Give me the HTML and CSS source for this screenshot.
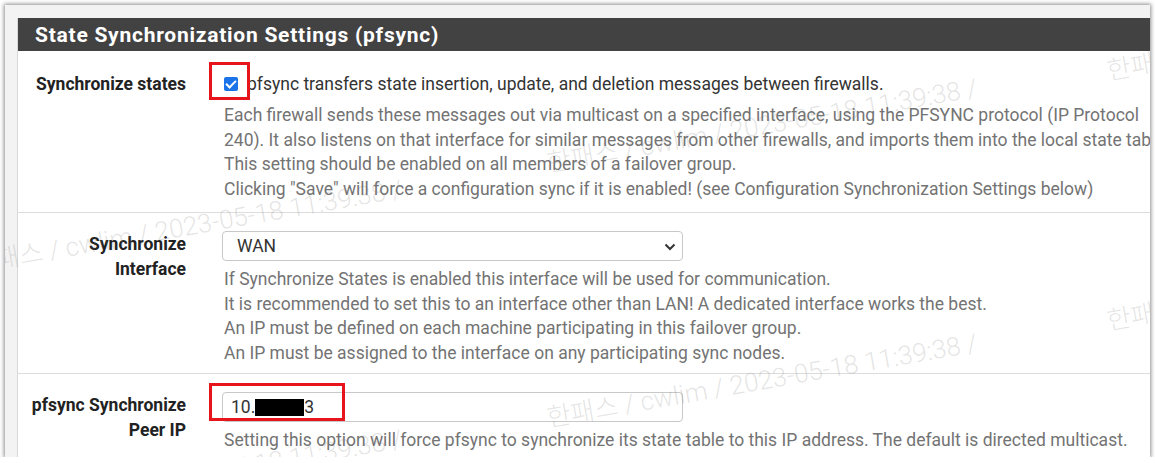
FILE: index.html
```html
<!DOCTYPE html>
<html>
<head>
<meta charset="utf-8">
<link rel="stylesheet" href="styles.css">
</head>
<body>
<div class="frame">
  <div class="panel">
    <div class="panel-heading">State Synchronization Settings (pfsync)</div>
    <div class="row row1">
      <div class="label">Synchronize states</div>
      <div class="field">
        <label class="check"><span class="cbox"><span class="mark"></span></span>pfsync transfers state insertion, update, and deletion messages between firewalls.</label>
        <div class="help">Each firewall sends these messages out via multicast on a specified interface, using the PFSYNC protocol (IP Protocol 240). It also listens on that interface for similar messages from other firewalls, and imports them into the local state table.<br>This setting should be enabled on all members of a failover group.<br>Clicking "Save" will force a configuration sync if it is enabled! (see Configuration Synchronization Settings below)</div>
      </div>
    </div>
    <div class="row row2">
      <div class="label">Synchronize<br>Interface</div>
      <div class="field">
        <div class="select">WAN<svg class="chev" width="12" height="8" viewBox="0 0 12 8"><path d="M1.5 1.5 L6 6 L10.5 1.5" fill="none" stroke="#333" stroke-width="2"/></svg></div>
        <div class="help">If Synchronize States is enabled this interface will be used for communication.<br>It is recommended to set this to an interface other than LAN! A dedicated interface works the best.<br>An IP must be defined on each machine participating in this failover group.<br>An IP must be assigned to the interface on any participating sync nodes.</div>
      </div>
    </div>
    <div class="row row3">
      <div class="label">pfsync Synchronize<br>Peer IP</div>
      <div class="field">
        <div class="input">10.<span class="redact"></span>3</div>
        <div class="help">Setting this option will force pfsync to synchronize its state table to this IP address. The default is directed multicast.</div>
      </div>
    </div>
  </div>
  <div class="hl hl1"></div>
  <div class="hl hl2"></div>
  <div class="wm wm1">한패스 / cwlim / 2023-05-18 11:39:38 /</div>
  <div class="wm wm2">한패스 / cwlim / 2023-05-18 11:39:38 /</div>
  <div class="wm wm3">한패스 / cwlim / 2023-05-18 11:39:38 /</div>
  <div class="wm wm4">한패</div>
  <div class="wm wm5">한패</div>
  <div class="wm wm6">한패스 / cwlim / 2023-05-18 11:39:38 /</div>
</div>
</body>
</html>
```
FILE: styles.css
```css
html, body { margin: 0; padding: 0; background: #fff; }
body { font-family: Roboto, "Noto Sans CJK KR", sans-serif; }
.frame {
  position: relative;
  margin: 5px 0 0 5px;
  width: 1145px;
  height: 452px;
  background: #f3f3f3;
  box-shadow: 0 0 4px 1px rgba(0,0,0,0.45);
  overflow: hidden;
  padding: 13px 0 0 12px;
  box-sizing: border-box;
}
.panel {
  background: #fff;
  border-left: 1px solid #d8d8d8;
  height: 100%;
  width: 1140px;
}
.panel-heading {
  background: #424242;
  color: #fff;
  font-weight: 700;
  font-size: 21px;
  letter-spacing: 0.75px;
  height: 33px;
  line-height: 34px;
  padding-left: 17px;
  white-space: nowrap;
}
.row {
  display: flex;
  border-bottom: 1px solid #ddd;
  height: 162px;
  box-sizing: border-box;
}
.row2 { height: 161px; }
.row3 { border-bottom: none; height: auto; }
.label {
  width: 168px;
  flex: none;
  text-align: right;
  font-weight: 700;
  font-size: 17.5px;
  color: #222;
  line-height: 25px;
  padding-top: 21px;
}
.row2 .label { padding-top: 18.5px; }
.row3 .label { padding-top: 18.5px; }
.field {
  padding-left: 38px;
  font-size: 17.5px;
  color: #333;
  flex: 1;
  min-width: 0;
}
.check {
  display: flex;
  align-items: center;
  height: 24px;
  margin-top: 21px;
  white-space: nowrap;
}
.cbox {
  width: 14px; height: 14px;
  background: #1a73e8;
  border-radius: 2px;
  margin-right: 9px;
  position: relative;
  flex: none;
}
.mark {
  position: absolute;
  left: 4px; top: 1px;
  width: 4px; height: 8px;
  border: solid #fff;
  border-width: 0 2px 2px 0;
  transform: rotate(45deg);
}
.help {
  color: #737373;
  line-height: 24.5px;
  margin-top: 7px;
  width: 950px;
}
.row2 .help { margin-top: 6px; }
.row3 .help { margin-top: 6px; white-space: nowrap; }
.select, .input {
  margin-left: -2px;
  margin-top: 18px;
  width: 461px;
  height: 30px;
  box-sizing: border-box;
  border: 1px solid #c8c8c8;
  border-radius: 4px;
  line-height: 28px;
  padding-left: 14px;
  color: #333;
  position: relative;
}
.chev { position: absolute; right: 6px; top: 11px; }
.input { padding-left: 8px; margin-top: 18px; }
.redact {
  display: inline-block;
  width: 49px;
  height: 17px;
  background: #000;
  vertical-align: -3px;
}
.hl {
  position: absolute;
  border: 3px solid #e8141c;
  box-sizing: border-box;
}
.hl1 { left: 204px; top: 57px; width: 41px; height: 38px; }
.hl2 { left: 204px; top: 378px; width: 136px; height: 38px; }
.wm {
  position: absolute;
  color: rgba(120,120,120,0.2);
  font-size: 26px;
  font-weight: 300;
  white-space: nowrap;
  transform: rotate(-10deg);
  transform-origin: left bottom;
  pointer-events: none;
}
.wm1 { left: 545px; top: 137px; }
.wm2 { left: -30px; top: 238px; }
.wm3 { left: 545px; top: 392px; }
.wm4 { left: 1105px; top: 45px; }
.wm5 { left: 1105px; top: 295px; }
.wm6 { left: -30px; top: 488px; }
```
